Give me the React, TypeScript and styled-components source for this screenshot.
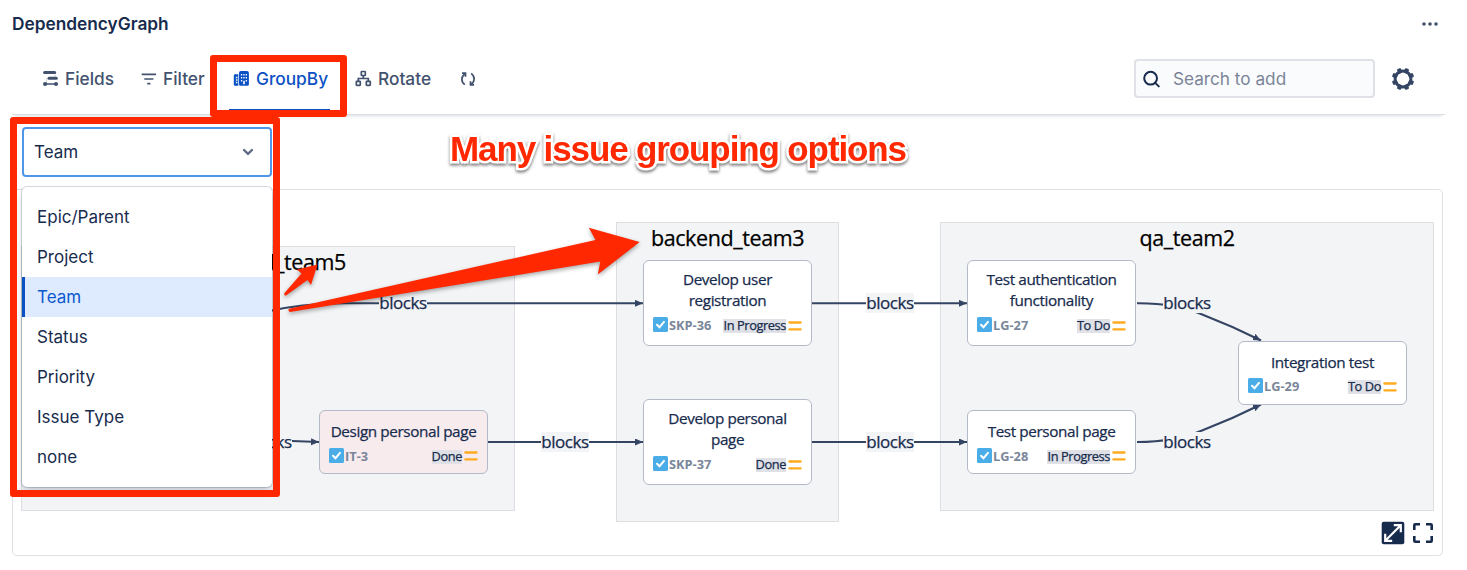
import React from "react";
import styled, { createGlobalStyle, css } from "styled-components";

const Global = createGlobalStyle`
  *, *::before, *::after { box-sizing: border-box; }
  body {
    margin: 0;
    background: #fff;
    color: #172b4d;
    font-family: Inter, "Liberation Sans", sans-serif;
  }
`;

const RED = "#ff2800";

const Page = styled.div`
  position: relative;
  display: flex;
  flex-direction: column;
  width: 1467px;
  height: 570px;
  padding-left: 12px;
  overflow: hidden;
`;

const Header = styled.header`
  display: flex;
  align-items: center;
  justify-content: space-between;
  height: 48px;
  padding-right: 29px;
`;

const Title = styled.h1`
  margin: 0 0 2px;
  font-size: 17.3px;
  font-weight: 600;
`;

const Toolbar = styled.div`
  display: flex;
  align-items: center;
  width: 1433px;
  height: 67px;
  padding: 0 30px 5px 29.5px;
  border-bottom: 1px solid #dcdfe4;
  box-shadow: 0 4px 3px -3px rgba(9, 30, 66, 0.16);
`;

const Tab = styled.button<{ $active?: boolean; $width: number }>`
  position: relative;
  display: flex;
  align-items: center;
  gap: 6.5px;
  width: ${(p) => p.$width}px;
  height: 62px;
  padding: 0;
  border: 0;
  background: none;
  font: 500 17.3px Inter, "Liberation Sans", sans-serif;
  white-space: nowrap;
  color: ${(p) => (p.$active ? "#0c51c4" : "#42526e")};
  svg { flex: none; }
  ${(p) =>
    p.$active &&
    css`
      &::after {
        content: "";
        position: absolute;
        left: -4px;
        top: 61px;
        width: 101px;
        height: 3px;
        background: #0c51c4;
      }
    `}
`;

const SearchBox = styled.label`
  display: flex;
  align-items: center;
  gap: 11px;
  width: 241px;
  height: 39px;
  margin-left: auto;
  padding-left: 6px;
  border: 2px solid #dfe1e6;
  border-radius: 4px;
  background: #fafbfc;
`;

const SearchInput = styled.input`
  width: 190px;
  padding: 0;
  border: 0;
  outline: 0;
  background: none;
  font: 400 17.2px Inter, "Liberation Sans", sans-serif;
  &::placeholder { color: #7a8599; opacity: 1; }
`;

const IconButton = styled.button`
  display: flex;
  margin-left: 16px;
  padding: 0;
  border: 0;
  background: none;
  color: #344563;
`;

const GroupBar = styled.div`
  display: flex;
  height: 74px;
  padding: 12px 0 0 10px;
`;

const SelectWrap = styled.div`
  position: relative;
  width: 250px;
`;

const SelectControl = styled.div`
  display: flex;
  align-items: center;
  justify-content: space-between;
  height: 50px;
  padding: 0 16px 0 10px;
  border: 2px solid #5096e8;
  border-radius: 4px;
  font-size: 17px;
`;

const Menu = styled.ul`
  position: absolute;
  z-index: 3;
  top: 60px;
  left: 0;
  width: 250px;
  height: 300px;
  margin: 0;
  padding: 10px 0 0;
  list-style: none;
  border-radius: 5px;
  background: #fff;
  box-shadow: 0 0 0 1px rgba(9, 30, 66, 0.16), 0 5px 9px -1px rgba(9, 30, 66, 0.22);
`;

const Option = styled.li<{ $selected?: boolean }>`
  height: 40px;
  padding-left: 15px;
  line-height: 40px;
  font-size: 17px;
  color: ${(p) => (p.$selected ? "#0c58cf" : "#172b4d")};
  background: ${(p) => (p.$selected ? "#deebff" : "transparent")};
  box-shadow: ${(p) => (p.$selected ? "inset 3px 0 0 #0c51c4" : "none")};
`;

const Canvas = styled.main`
  position: relative;
  width: 1431px;
  height: 367px;
  border: 1px solid #dfe1e6;
  border-radius: 5px;
  font-family: "Open Sans", "Noto Sans", sans-serif;
  -webkit-text-stroke: 0.25px currentColor;
`;

const Cluster = styled.section<{ $x: number; $y: number; $w: number; $h: number }>`
  position: absolute;
  left: ${(p) => p.$x - 13}px;
  top: ${(p) => p.$y - 190}px;
  width: ${(p) => p.$w}px;
  height: ${(p) => p.$h}px;
  border: 1px solid #dcdee2;
  background: #f3f4f6;
  text-align: center;
`;

const ClusterTitle = styled.h2`
  margin: 0;
  font-size: 21.5px;
  font-weight: 400;
  line-height: 30px;
  letter-spacing: -0.4px;
  color: #000;
`;

const Edges = styled.svg`
  position: absolute;
  left: -1px;
  top: -1px;
`;

const EdgeLabel = styled.span<{ $x: number; $y: number }>`
  position: absolute;
  left: ${(p) => p.$x - 13}px;
  top: ${(p) => p.$y - 190 - 10}px;
  width: 48px;
  height: 20px;
  line-height: 19px;
  font-size: 17px;
  letter-spacing: -0.45px;
  text-align: center;
  background: #f3f4f6;
`;

const Node = styled.article<{ $x: number; $y: number; $tall: boolean; $pink?: boolean }>`
  position: absolute;
  left: ${(p) => p.$x - 13}px;
  top: ${(p) => p.$y - 190}px;
  display: flex;
  flex-direction: column;
  justify-content: space-between;
  width: 169px;
  height: ${(p) => (p.$tall ? 86 : 64)}px;
  padding: ${(p) => (p.$tall ? "8px 9px 12px 9px" : "10px 9px 9.5px 9px")};
  border: 1px solid #b3b9c6;
  border-radius: 6px;
  background: ${(p) => (p.$pink ? "#f7ebed" : "#fff")};
`;

const NodeTitle = styled.div`
  font-size: 15.3px;
  line-height: 21px;
  letter-spacing: -0.4px;
  text-align: center;
  white-space: pre-line;
`;

const NodeMeta = styled.div`
  display: flex;
  align-items: center;
  height: 17px;
  font-size: 12.8px;
  line-height: 15px;
`;

const Key = styled.span`
  margin: 2px 0 0 1px;
  font-weight: 700;
  letter-spacing: 0;
  color: #7a869a;
  -webkit-text-stroke: 0;
`;

const Status = styled.span`
  height: 14px;
  margin: 3px 2px 0 auto;
  line-height: 13px;
  letter-spacing: -0.4px;
  background: #dfe1e6;
`;

const CanvasTools = styled.div`
  position: absolute;
  right: 8px;
  bottom: 10px;
  display: flex;
  align-items: center;
  gap: 7px;
`;

const Highlight = styled.div<{ $x: number; $y: number; $w: number; $h: number }>`
  position: absolute;
  z-index: 4;
  left: ${(p) => p.$x}px;
  top: ${(p) => p.$y}px;
  width: ${(p) => p.$w}px;
  height: ${(p) => p.$h}px;
  border: 7px solid ${RED};
  border-radius: 3px;
`;

const Callout = styled.div`
  position: absolute;
  z-index: 4;
  left: 450px;
  top: 129px;
  font: 700 35px/40px "Liberation Sans", Arial, sans-serif;
  letter-spacing: -1.12px;
  white-space: nowrap;
  color: ${RED};
  -webkit-text-stroke: 5px #fff;
  paint-order: stroke fill;
  filter: drop-shadow(0 2px 1.5px rgba(0, 0, 0, 0.5));
`;

const Arrows = styled.svg`
  position: absolute;
  z-index: 4;
  left: 0;
  top: 0;
  pointer-events: none;
  filter: drop-shadow(0 2px 2px rgba(0, 0, 0, 0.35));
`;

const FieldsIcon = () => (
  <svg width="17" height="17" viewBox="0 0 17 17" fill="none" stroke="currentColor" strokeLinecap="round">
    <path d="M2.6 2.6H12.6" strokeWidth="3" />
    <path d="M7 8.3H14.3" strokeWidth="3" />
    <path d="M3.4 14H14" strokeWidth="1.5" />
    <path d="M4.6 8.3V13.6M13.2 2.6V8" strokeWidth="0.8" opacity=".25" />
    <circle cx="3.1" cy="14" r="2.1" fill="currentColor" stroke="none" />
    <circle cx="14" cy="14" r="2.1" fill="currentColor" stroke="none" />
  </svg>
);

const FilterIcon = () => (
  <svg width="16" height="16" viewBox="0 0 16 16" fill="none" stroke="currentColor" strokeWidth="1.6">
    <path d="M.7 3.4H15M3.3 8H12.4M6.3 12.6H9.4" />
  </svg>
);

const GroupIcon = () => (
  <svg width="17" height="17" viewBox="0 0 17 17">
    <path
      fill="currentColor"
      d="M.8 5.5Q.8 4.3 2 4.3H5.3V15.7H2Q.8 15.7.8 14.5ZM6 3Q6 1.1 7.8 1.1H14Q15.9 1.1 15.9 3V14.2Q15.9 15.7 14.4 15.7H7.5Q6 15.7 6 14.2Z"
    />
    <path
      fill="#fff"
      d="M7.9 4h1.3v1.5H7.9zM10.3 4h1.3v1.5h-1.3zM12.7 4H14v1.5h-1.3zM7.9 7h1.3v1.5H7.9zM10.3 7h1.3v1.5h-1.3zM12.7 7H14v1.5h-1.3zM7.9 10h1.3v1.5H7.9zM12.7 10H14v1.5h-1.3zM10.2 10.8h1.6v3.4h-1.6zM2.9 6.8h1.5v1.4H2.9zM2.9 9.3h1.5v1.4H2.9zM2.9 11.8h1.5v1.4H2.9z"
    />
  </svg>
);

const TreeIcon = () => (
  <svg width="17" height="17" viewBox="0 0 17 17" fill="none" stroke="currentColor" strokeWidth="1.7">
    <rect x="6.3" y="1.5" width="4" height="4" rx=".6" />
    <rect x="1.3" y="11.3" width="4" height="4" rx=".6" />
    <rect x="11.3" y="11.3" width="4" height="4" rx=".6" />
    <path d="M8.3 5.5V8.5M3.3 11.3V8.5H13.3V11.3" />
  </svg>
);

const RefreshIcon = () => (
  <svg width="16" height="16" viewBox="0 0 16 16" fill="none" stroke="currentColor" strokeWidth="1.7">
    <path d="M2 2.1H5.5V5.8M5.2 2.6C.8 5.4.8 10.6 4.8 13.7M14 13.9H10.5V10.2M10.8 13.4C15.2 10.6 15.2 5.4 11.2 2.3" />
  </svg>
);

const SearchIcon = () => (
  <svg width="20" height="20" viewBox="0 0 20 20" fill="none" stroke="#172b4d" strokeWidth="2">
    <circle cx="8.6" cy="9.2" r="6.4" />
    <path d="M13.2 13.9L16.8 17.4" strokeLinecap="round" />
  </svg>
);

const GearIcon = () => (
  <svg width="24" height="24" viewBox="-12 -12 24 24" fill="currentColor">
    {Array.from({ length: 8 }, (_, i) => (
      <rect key={i} x="-2.2" y="-11.2" width="4.4" height="5" rx="1.2" transform={`rotate(${i * 45 + 22.5})`} />
    ))}
    <circle r="7.9" fill="none" stroke="currentColor" strokeWidth="3" />
  </svg>
);

const MoreIcon = () => (
  <svg width="16" height="4" viewBox="0 0 16 4" fill="#42526e">
    <circle cx="2" cy="2" r="1.8" />
    <circle cx="8" cy="2" r="1.8" />
    <circle cx="14" cy="2" r="1.8" />
  </svg>
);

const ChevronIcon = () => (
  <svg width="12" height="8" viewBox="0 0 12 8" fill="none" stroke="#5e6c84" strokeWidth="2.4" strokeLinecap="round">
    <path d="M2 2L6 5.8L10 2" />
  </svg>
);

const TaskIcon = () => (
  <svg width="15" height="15" viewBox="0 0 15 15">
    <rect width="15" height="15" rx="1.5" fill="#4bade8" />
    <path d="M4 7.7L6.5 10.2L11 4.9" fill="none" stroke="#fff" strokeWidth="2" strokeLinecap="round" />
  </svg>
);

const PriorityIcon = styled(({ className }: { className?: string }) => (
  <svg className={className} width="14" height="10" viewBox="0 0 14 10" stroke="#ffab1f" strokeWidth="2.3" strokeLinecap="round">
    <path d="M1.4 1.5H12.6M1.4 8.4H12.6" />
  </svg>
))`
  margin-top: 2px;
`;

const ExpandIcon = () => (
  <svg width="24" height="24" viewBox="0 0 24 24">
    <rect x=".7" y=".7" width="22.6" height="22.6" rx="2" fill="#172b4d" />
    <path d="M4.5 19.5L19.5 4.5M12.8 4.2H19.8V11.2M4.2 12.8V19.8H11.2" fill="none" stroke="#fff" strokeWidth="2.2" />
  </svg>
);

const FullscreenIcon = () => (
  <svg width="22" height="22" viewBox="0 0 22 22" fill="none" stroke="#172b4d" strokeWidth="2.6">
    <path d="M2.3 8V3.3Q2.3 2.3 3.3 2.3H8M14 2.3H18.7Q19.7 2.3 19.7 3.3V8M19.7 14V18.7Q19.7 19.7 18.7 19.7H14M8 19.7H3.3Q2.3 19.7 2.3 18.7V14" />
  </svg>
);

const options = ["Epic/Parent", "Project", "Team", "Status", "Priority", "Issue Type", "none"];

const clusters = [
  { name: "frontend_team5", x: 21, y: 246, w: 494, h: 265 },
  { name: "backend_team3", x: 616, y: 222, w: 223, h: 300 },
  { name: "qa_team2", x: 940, y: 222, w: 494, h: 289 },
];

const nodes = [
  { title: "Design personal page", id: "IT-3", status: "Done", x: 319, y: 410, pink: true },
  { title: "Develop user\nregistration", id: "SKP-36", status: "In Progress", x: 643, y: 260, tall: true },
  { title: "Develop personal\npage", id: "SKP-37", status: "Done", x: 643, y: 399, tall: true },
  { title: "Test authentication\nfunctionality", id: "LG-27", status: "To Do", x: 967, y: 260, tall: true },
  { title: "Test personal page", id: "LG-28", status: "In Progress", x: 967, y: 410 },
  { title: "Integration test", id: "LG-29", status: "To Do", x: 1238, y: 340.5 },
];

const edges = [
  "M265 312Q300 303.4 345 303.3H643",
  "M265 440Q290 441 319 442",
  "M488 442H643",
  "M812 303.3H967",
  "M812 442H967",
  "M1137 303.3Q1175 303 1201 314Q1232 326 1261 340.5",
  "M1137 442Q1175 442 1202 430.5Q1232 419 1261 404.5",
];

const labels = [
  { x: 379, y: 303 },
  { x: 244, y: 442 },
  { x: 541, y: 442 },
  { x: 866, y: 303 },
  { x: 866, y: 442 },
  { x: 1163, y: 303 },
  { x: 1163, y: 442 },
];

export default function App() {
  return (
    <Page>
      <Global />
      <Header>
        <Title>DependencyGraph</Title>
        <MoreIcon />
      </Header>
      <Toolbar>
        <Tab $width={99}><FieldsIcon />Fields</Tab>
        <Tab $width={92}><FilterIcon />Filter</Tab>
        <Tab $width={122} $active><GroupIcon />GroupBy</Tab>
        <Tab $width={105}><TreeIcon />Rotate</Tab>
        <Tab $width={20} aria-label="Refresh"><RefreshIcon /></Tab>
        <SearchBox>
          <SearchIcon />
          <SearchInput placeholder="Search to add" />
        </SearchBox>
        <IconButton aria-label="Settings"><GearIcon /></IconButton>
      </Toolbar>
      <GroupBar>
        <SelectWrap>
          <SelectControl>Team<ChevronIcon /></SelectControl>
          <Menu>
            {options.map((o) => (
              <Option key={o} $selected={o === "Team"}>{o}</Option>
            ))}
          </Menu>
        </SelectWrap>
      </GroupBar>
      <Canvas>
        {clusters.map((c) => (
          <Cluster key={c.name} $x={c.x} $y={c.y} $w={c.w} $h={c.h}>
            <ClusterTitle>{c.name}</ClusterTitle>
          </Cluster>
        ))}
        <Edges width="1431" height="367" viewBox="12 189 1431 367">
          <defs>
            <marker id="head" markerUnits="userSpaceOnUse" markerWidth="9" markerHeight="8" refX="8" refY="3.5" orient="auto">
              <path d="M0 0L8 3.5L0 7Z" fill="#344563" />
            </marker>
          </defs>
          {edges.map((d) => (
            <path key={d} d={d} fill="none" stroke="#344563" strokeWidth="2" markerEnd="url(#head)" />
          ))}
        </Edges>
        {labels.map((l) => (
          <EdgeLabel key={`${l.x}-${l.y}`} $x={l.x} $y={l.y}>blocks</EdgeLabel>
        ))}
        {nodes.map((n) => (
          <Node key={n.id} $x={n.x} $y={n.y} $tall={!!n.tall} $pink={n.pink}>
            <NodeTitle>{n.title}</NodeTitle>
            <NodeMeta>
              <TaskIcon />
              <Key>{n.id}</Key>
              <Status>{n.status}</Status>
              <PriorityIcon />
            </NodeMeta>
          </Node>
        ))}
        <CanvasTools>
          <ExpandIcon />
          <FullscreenIcon />
        </CanvasTools>
      </Canvas>
      <Highlight $x={210} $y={55} $w={137} $h={62} />
      <Highlight $x={10} $y={117} $w={270} $h={380} />
      <Callout>Many issue grouping options</Callout>
      <Arrows width="1467" height="570" viewBox="0 0 1467 570" fill={RED}>
        <path d="M289 308.8L595.5 240L588.8 227.8L639.7 242L597.8 274.5L600.3 261.5L290 312Q287.5 311 289 308.8Z" />
        <path d="M284.5 293L301.5 273.5L297 269.5L317.5 264.5L311 285L307.5 280L286 295.5Q283.5 295.8 284.5 293Z" />
      </Arrows>
    </Page>
  );
}
